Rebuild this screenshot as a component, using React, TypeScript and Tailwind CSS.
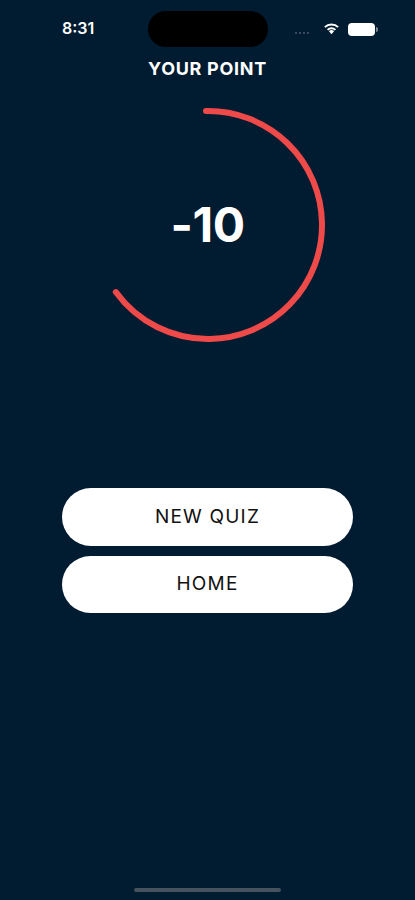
import React from "react";

export default function App() {
  const r = 114;
  const c = 2 * Math.PI * r;
  const frac = 0.652;
  return (
    <div className="w-[415px] h-[900px] bg-[#011b30] relative overflow-hidden flex flex-col items-center" style={{ fontFamily: "Inter, 'Noto Sans', sans-serif" }}>
      {/* status bar */}
      <div className="w-full h-[56px] flex items-start relative">
        <div className="absolute left-[62px] top-[18px] text-white text-[16px] font-semibold leading-[20px]">8:31</div>
        <div className="absolute left-[148px] top-[11px] w-[120px] h-[36px] rounded-full bg-black" />
        <div className="absolute left-[295px] top-[32px] flex gap-[2px]">
          {[0, 1, 2, 3].map((i) => (
            <div key={i} className="w-[2px] h-[2px] rounded-full bg-[#4b5b6b]" />
          ))}
        </div>
        <svg className="absolute left-[323px] top-[21px]" width="17" height="14" viewBox="0 0 17 14">
          <path d="M8.5 13.2 L5.9 10.3 A3.8 3.8 0 0 1 11.1 10.3 Z" fill="white" />
          <path d="M3.9 8.2 A6.6 6.6 0 0 1 13.1 8.2 L11.7 9.6 A4.6 4.6 0 0 0 5.3 9.6 Z" fill="white" />
          <path d="M1.2 5.4 A10.4 10.4 0 0 1 15.8 5.4 L14.4 6.8 A8.4 8.4 0 0 0 2.6 6.8 Z" fill="white" />
        </svg>
        <div className="absolute left-[348px] top-[23px] w-[27px] h-[13px] rounded-[4px] bg-white" />
        <div className="absolute left-[376px] top-[27px] w-[2px] h-[5px] rounded-r-[2px] bg-[#7d8792]" />
      </div>

      <div className="mt-[2px] text-white text-[18px] font-bold leading-[22px] tracking-[0.7px]">YOUR POINT</div>

      <div className="mt-[25px] relative w-[240px] h-[240px] flex items-center justify-center">
        <svg className="absolute inset-0" width="240" height="240" viewBox="0 0 240 240">
          <circle
            cx="120"
            cy="120"
            r={r}
            fill="none"
            stroke="#ef4a4a"
            strokeWidth="6"
            strokeLinecap="round"
            strokeDasharray={`${c * frac} ${c}`}
            transform="rotate(-91 120 120)"
          />
        </svg>
        <div className="text-white text-[48px] font-bold leading-none tracking-[-0.5px]">-10</div>
      </div>

      <div className="mt-[143px] flex flex-col gap-[10px]">
        <button className="w-[291px] h-[58px] rounded-full bg-white text-[#111] text-[19px] tracking-[1.2px] flex items-center justify-center">
          NEW QUIZ
        </button>
        <button className="w-[291px] h-[57px] rounded-full bg-white text-[#111] text-[19px] tracking-[1.2px] flex items-center justify-center">
          HOME
        </button>
      </div>

      <div className="absolute left-[134px] top-[888px] w-[147px] h-[4px] rounded-full bg-[#46525d]" />
    </div>
  );
}
